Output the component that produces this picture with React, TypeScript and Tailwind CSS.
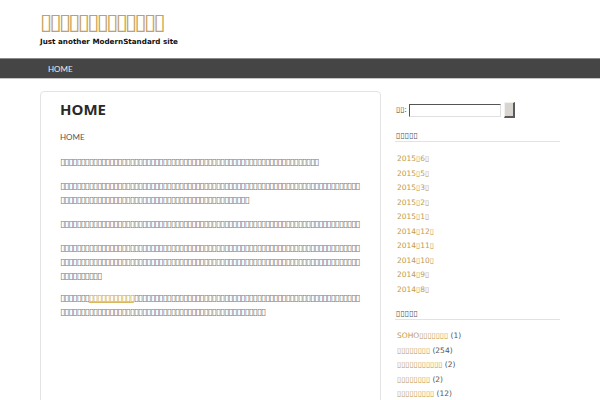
import React from "react";

const B = (n: number) => "\u25AF".repeat(n);

const archives = [
  `2015${B(1)}6${B(1)}`,
  `2015${B(1)}5${B(1)}`,
  `2015${B(1)}3${B(1)}`,
  `2015${B(1)}2${B(1)}`,
  `2015${B(1)}1${B(1)}`,
  `2014${B(1)}12${B(1)}`,
  `2014${B(1)}11${B(1)}`,
  `2014${B(1)}10${B(1)}`,
  `2014${B(1)}9${B(1)}`,
  `2014${B(1)}8${B(1)}`,
];

const cats: [string, string][] = [
  [`SOHO${B(7)}`, "(1)"],
  [B(8), "(254)"],
  [B(11), "(2)"],
  [B(8), "(2)"],
  [B(9), "(12)"],
];

export default function App() {
  return (
    <div className="w-[600px] h-[400px] overflow-hidden bg-white font-['DejaVu_Sans',sans-serif]">
      <header className="h-[58px] px-[40px] pt-[11px]">
        <div className="text-[22px] leading-[22px] tracking-[-2.65px] text-[#c4a259]">{B(13)}</div>
        <div className="mt-[4px] text-[7.2px] leading-[9px] font-bold text-[#111]">
          Just another ModernStandard site
        </div>
      </header>

      <nav className="h-[21px] bg-[#454545] border-t border-t-[#8a8a8a] border-b border-b-[#c4c4c4] flex items-center pl-[48px]">
        <span className="font-['Lato'] text-[8px] leading-[10px] text-[#ececec]">HOME</span>
      </nav>

      <div className="flex px-[40px] pt-[12px] gap-[14px]">
        <main className="w-[341px] h-[330px] shrink-0 border border-[#e4e4e4] rounded-[4px] pl-[19px] pr-[18px] pt-[7px]">
          <h1 className="font-['Open_Sans'] font-bold text-[15px] leading-[20px] text-[#2a2a2a]">HOME</h1>
          <div className="mt-[11px] font-['Lato'] text-[8px] leading-[14px] text-[#555]">HOME</div>
          <div className="mt-[11px] text-[9.5px] leading-[14px] tracking-[-1.13px] break-all text-[#777]">
            <p className="mb-[10px]">{B(63)}</p>
            <p className="mb-[10px]">{B(119)}</p>
            <p className="mb-[10px]">{B(73)}</p>
            <p className="mb-[8px]">{B(156)}</p>
            <p className="mb-[10px]">
              {B(7)}
              <a className="text-[#c9a44c] underline decoration-[#d9b860]">{B(11)}</a>
              {B(55)}
              {B(50)}
            </p>
          </div>
        </main>

        <aside className="w-[165px] pt-[11px]">
          <div className="flex items-center h-[16px]">
            <span className="text-[7.5px] leading-[10px] text-[#444] pl-[1px]">{B(2)}:</span>
            <span className="ml-[2px] w-[92px] h-[13px] border-t border-l border-t-[#555] border-l-[#555] border-b border-r border-b-[#e0e0e0] border-r-[#e0e0e0] bg-white" />
            <span className="ml-[3px] w-[11px] h-[16px] bg-[#d8d5d0] border-t border-l border-t-[#f2f2f2] border-l-[#f2f2f2] border-r-2 border-b-2 border-r-[#5a5a5a] border-b-[#5a5a5a]" />
          </div>

          <div className="mt-[13px] text-[8px] leading-[10px] text-[#555] pl-[1px] border-b border-[#e2e2e2]">{B(5)}</div>
          <ul className="mt-[10px] pl-[2px]">
            {archives.map((a) => (
              <li key={a} className="text-[7.5px] leading-[14.5px] text-[#c09a4c]">{a}</li>
            ))}
          </ul>

          <div className="mt-[12px] text-[8px] leading-[10px] text-[#555] pl-[1px] border-b border-[#e2e2e2]">{B(5)}</div>
          <ul className="mt-[9px] pl-[2px]">
            {cats.map(([t, c], i) => (
              <li key={i} className="text-[7.5px] leading-[14.5px]">
                <span className="text-[#c09a4c]">{t}</span>
                <span className="text-[#555]"> {c}</span>
              </li>
            ))}
          </ul>
        </aside>
      </div>
    </div>
  );
}
